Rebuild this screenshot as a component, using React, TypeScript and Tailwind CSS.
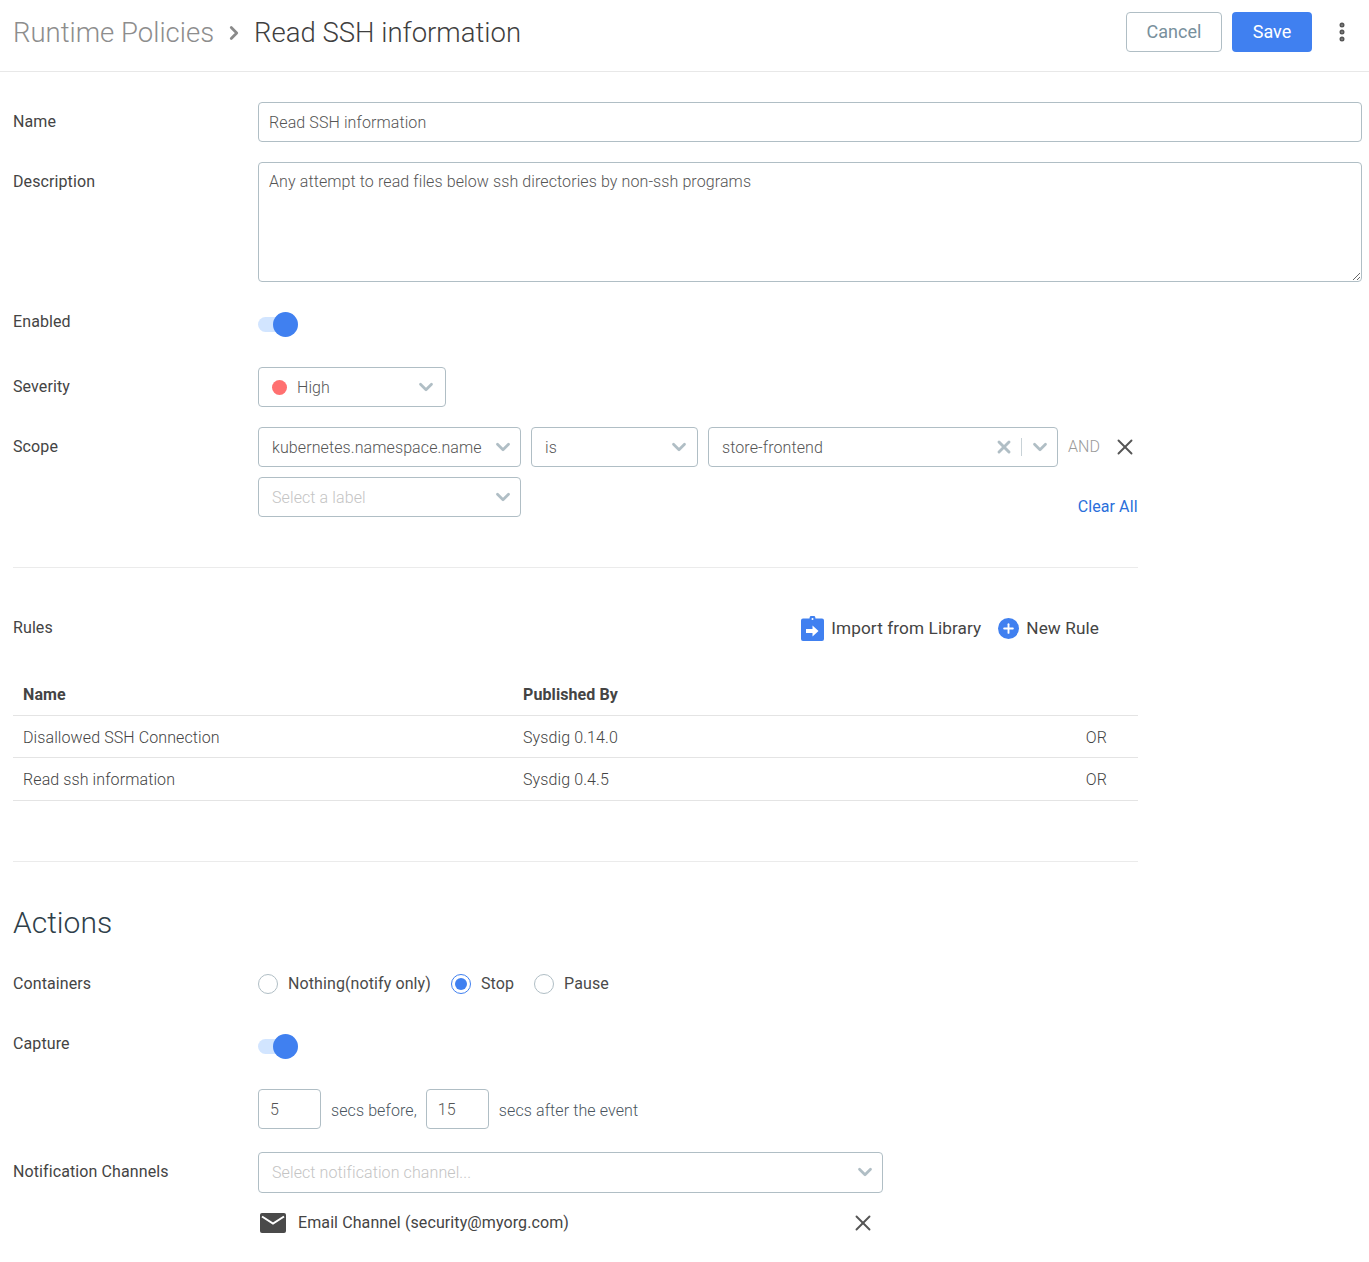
import { ChevronDown, ChevronRight, MoreVertical, Plus, X } from 'lucide-react';

const rules = [
  { name: 'Disallowed SSH Connection', publishedBy: 'Sysdig 0.14.0' },
  { name: 'Read ssh information', publishedBy: 'Sysdig 0.4.5' },
];

function Chevron() {
  return <ChevronDown className="size-[22px] text-[#b0bec5]" strokeWidth={3} />;
}

function Toggle() {
  return (
    <div className="relative h-[25px] w-[40px]">
      <div className="absolute left-0 top-[5px] h-[15px] w-[28px] rounded-full bg-[#d2e5ff]" />
      <div className="absolute left-[15px] top-0 size-[25px] rounded-full bg-[#4080f0]" />
    </div>
  );
}

function Select({ className, placeholder, children }: { className: string; placeholder?: boolean; children: React.ReactNode }) {
  return (
    <div className={`flex items-center justify-between rounded-[4px] border border-[#b0bec5] pl-[13px] ${className} ${placeholder ? 'text-[#c4c4c4]' : 'text-[#555]'}`}>
      <div className="mt-[1px] flex items-center font-light">{children}</div>
      <Chevron />
    </div>
  );
}

function Radio({ label, checked }: { label: string; checked?: boolean }) {
  return (
    <div className="flex items-center gap-[10px]">
      <div className={`flex size-[20px] items-center justify-center rounded-full border ${checked ? 'border-[#4080f0]' : 'border-[#b0bec5]'}`}>
        {checked && <div className="size-[12px] rounded-full bg-[#4080f0]" />}
      </div>
      <span className="text-[#4a4a4a]">{label}</span>
    </div>
  );
}

export default function App() {
  return (
    <div className="h-[1262px] bg-white font-['Roboto',sans-serif] text-[16px] tracking-[0.1px] text-[#444]">
      <header className="flex h-[72px] items-center justify-between border-b border-[#e8e8e8] pb-[8px] pl-[13px] pr-[15px]">
        <div className="mt-[2px] flex items-center text-[27.5px] font-light tracking-normal">
          <span className="text-[#8d8d8d]">Runtime Policies</span>
          <ChevronRight className="ml-[9px] mr-[9px] size-[22px] text-[#8a8a8a]" strokeWidth={3} />
          <span className="text-[#3f3f3f]">Read SSH information</span>
        </div>
        <div className="flex items-center">
          <button className="h-[40px] w-[96px] rounded-[4px] border border-[#b0bec5] text-[18px] tracking-normal text-[#78909c]">Cancel</button>
          <button className="ml-[10px] h-[40px] w-[80px] rounded-[4px] bg-[#4080f0] text-[18px] tracking-normal text-white">Save</button>
          <MoreVertical className="ml-[18px] size-[24px] text-[#555]" strokeWidth={3} />
        </div>
      </header>

      <main className="pl-[13px] pr-[7px] pt-[30px]">
        <div className="flex">
          <label className="w-[245px] pt-[8px]">Name</label>
          <input
            readOnly
            value="Read SSH information"
            className="h-[40px] flex-1 rounded-[4px] border border-[#b0bec5] px-[10px] font-light text-[#555] outline-none"
          />
        </div>

        <div className="mt-[20px] flex">
          <label className="w-[245px] pt-[8px]">Description</label>
          <textarea
            readOnly
            value="Any attempt to read files below ssh directories by non-ssh programs"
            className="h-[120px] flex-1 rounded-[4px] border border-[#b0bec5] px-[10px] py-[7px] font-light text-[#555] outline-none"
          />
        </div>

        <div className="mt-[20px] flex h-[65px]">
          <label className="w-[245px] pt-[8px]">Enabled</label>
          <div className="pt-[10px]">
            <Toggle />
          </div>
        </div>

        <div className="flex">
          <label className="w-[245px] pt-[8px]">Severity</label>
          <Select className="h-[40px] w-[188px] pr-[8px]">
            <span className="mr-[10px] size-[15px] rounded-full bg-[#ff7070]" />
            High
          </Select>
        </div>

        <div className="mt-[20px] flex w-[1125px]">
          <label className="w-[245px] shrink-0 pt-[8px]">Scope</label>
          <div className="flex-1">
            <div className="flex items-center">
              <Select className="h-[40px] w-[263px] pr-[6px]">kubernetes.namespace.name</Select>
              <div className="ml-[10px]">
                <Select className="h-[40px] w-[167px] pr-[7px]">is</Select>
              </div>
              <div className="ml-[10px] flex h-[40px] w-[350px] items-center rounded-[4px] border border-[#b0bec5] pl-[13px] pr-[6px]">
                <span className="mt-[1px] flex-1 font-light text-[#555]">store-frontend</span>
                <X className="size-[20px] text-[#b0bec5]" strokeWidth={3.5} />
                <div className="ml-[7px] mr-[7px] h-[18px] w-px bg-[#c8d2d7]" />
                <Chevron />
              </div>
              <span className="ml-[10px] font-light text-[#9a9a9a]">AND</span>
              <X className="ml-[12px] size-[26px] text-[#555]" strokeWidth={1.75} />
            </div>
            <div className="mt-[10px] flex items-start justify-between">
              <Select className="h-[40px] w-[263px] pr-[6px]" placeholder>Select a label</Select>
              <span className="mr-[0.5px] mt-[18px] text-[#2a6fdb]">Clear All</span>
            </div>
          </div>
        </div>

        <div className="mt-[48px] w-[1125px] border-t border-[#ebebeb]" />

        <div className="mt-[48px] flex h-[24px] w-[1125px] items-center justify-between">
          <label>Rules</label>
          <div className="mr-[39px] flex items-center text-[17.2px] text-[#444]">
            <svg viewBox="0 0 23 25" className="mr-[7px] h-[25px] w-[23px]">
              <path d="M2 2.500h6.500a3 3 0 0 1 6 0H21a2 2 0 0 1 2 2V23a2 2 0 0 1-2 2H2a2 2 0 0 1-2-2V4.500a2 2 0 0 1 2-2z" fill="#4080f0" />
              <circle cx="11.500" cy="3" r="1" fill="#fff" />
              <path d="M5 13h6.500V9.500l6 5.500-6 5.500V17H5z" fill="#fff" />
            </svg>
            <span className="mt-[1px]">Import from Library</span>
            <div className="ml-[17px] mr-[7px] flex size-[21px] items-center justify-center rounded-full bg-[#4080f0]">
              <Plus className="size-[15px] text-white" strokeWidth={3} />
            </div>
            <span className="mt-[1px]">New Rule</span>
          </div>
        </div>

        <table className="mt-[33px] w-[1125px] border-collapse">
          <thead>
            <tr className="h-[42px] border-b border-[#e4e4e4] text-left">
              <th className="w-[510px] pl-[10px] pt-[2px] font-bold text-[#444]">Name</th>
              <th className="pt-[2px] font-bold text-[#444]">Published By</th>
              <th />
            </tr>
          </thead>
          <tbody className="font-light text-[#444]">
            {rules.map((rule) => (
              <tr key={rule.name} className="h-[42.500px] border-b border-[#e4e4e4]">
                <td className="pl-[10px] pt-[3px]">{rule.name}</td>
                <td className="pt-[3px]">{rule.publishedBy}</td>
                <td className="pr-[31px] pt-[3px] text-right">OR</td>
              </tr>
            ))}
          </tbody>
        </table>

        <div className="mt-[60px] w-[1125px] border-t border-[#ebebeb]" />

        <h2 className="mt-[41px] h-[40px] text-[30px] font-light leading-[40px] tracking-normal text-[#2f3f4a]">Actions</h2>

        <div className="mt-[29px] flex h-[24px] items-center">
          <label className="w-[245px]">Containers</label>
          <div className="flex items-center gap-[20px]">
            <Radio label="Nothing(notify only)" />
            <Radio label="Stop" checked />
            <Radio label="Pause" />
          </div>
        </div>

        <div className="mt-[34px] flex h-[60px]">
          <label className="w-[245px] pt-[2px]">Capture</label>
          <div className="pt-[4px]">
            <Toggle />
          </div>
        </div>

        <div className="ml-[245px] mt-[-1px] flex items-center font-light text-[#4a5560]">
          <input readOnly value="5" className="h-[40px] w-[63px] rounded-[4px] border border-[#b0bec5] px-[11px] pt-[1px] font-light text-[#555] outline-none" />
          <span className="ml-[10px] mt-[4px]">secs before,</span>
          <input readOnly value="15" className="ml-[9px] h-[40px] w-[63px] rounded-[4px] border border-[#b0bec5] px-[11px] pt-[1px] font-light text-[#555] outline-none" />
          <span className="ml-[10px] mt-[4px]">secs after the event</span>
        </div>

        <div className="mt-[23px] flex">
          <label className="w-[245px] pt-[8px]">Notification Channels</label>
          <div className="w-[625px]">
            <Select className="h-[41px] w-full pr-[6px]" placeholder>Select notification channel...</Select>
            <div className="mt-[18px] flex h-[24px] items-center justify-between pr-[7px]">
              <div className="flex items-center">
                <svg viewBox="0 0 26 20" className="ml-[2px] mr-[12px] h-[20px] w-[26px]">
                  <rect width="26" height="20" rx="2" fill="#4a4a4a" />
                  <path d="M2 3.500l11 7 11-7" fill="none" stroke="#fff" strokeWidth="2" />
                </svg>
                <span className="text-[#444]">Email Channel (security@myorg.com)</span>
              </div>
              <X className="size-[26px] text-[#555]" strokeWidth={1.75} />
            </div>
          </div>
        </div>
      </main>
    </div>
  );
}
